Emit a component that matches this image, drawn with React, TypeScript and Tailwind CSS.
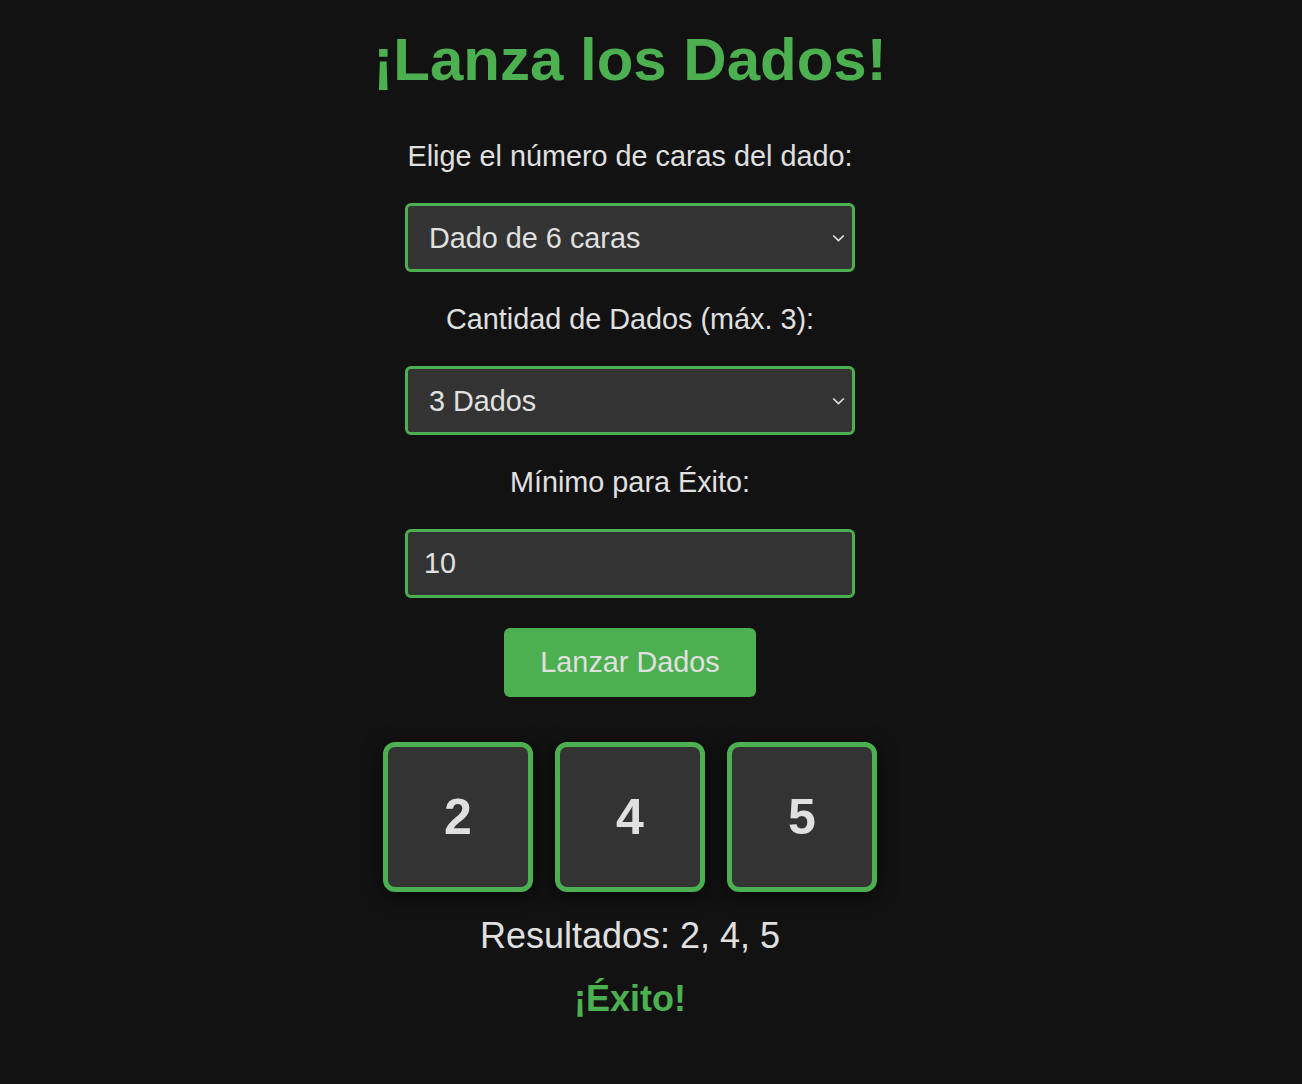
import React, { useState } from "react";

const Chevron = () => (
  <svg
    className="pointer-events-none absolute right-[10px] top-1/2 -translate-y-1/2"
    width="13"
    height="8"
    viewBox="0 0 13 8"
    fill="none"
  >
    <path d="M1.2 1.5 L6.5 6.5 L11.8 1.5" stroke="#e0e0e0" strokeWidth="1.7" />
  </svg>
);

const Die = (props: { value: number }) => (
  <div className="flex h-[150px] w-[150px] items-center justify-center rounded-[12px] border-[5px] border-[#4caf50] bg-[#333333] text-[50px] font-bold text-[#e0e0e0] shadow-[0_4px_20px_rgba(0,0,0,0.6)]">
    {props.value}
  </div>
);

export default function App() {
  const [sides, setSides] = useState("6");
  const [count, setCount] = useState("3");
  const [min, setMin] = useState("10");
  const results = [2, 4, 5];

  return (
    <div className="min-h-[1084px] bg-[#121212] font-['Liberation_Sans',Arial,sans-serif] text-[#e0e0e0]">
      <div className="flex w-[1260px] flex-col items-center pt-[24px]">
        <h1 className="text-[60px] font-bold leading-[72px] text-[#4caf50]">¡Lanza los Dados!</h1>

        <label className="mt-[44px] text-[28.8px] leading-[32px]">Elige el número de caras del dado:</label>
        <div className="relative mt-[31px]">
          <select
            value={sides}
            onChange={e => setSides(e.target.value)}
            className="h-[69px] w-[450px] appearance-none rounded-[6px] border-[3px] border-[#4caf50] bg-[#333333] pl-[21px] pt-[2px] text-[28.8px] text-[#e0e0e0] outline-none"
          >
            <option value="4">Dado de 4 caras</option>
            <option value="6">Dado de 6 caras</option>
            <option value="8">Dado de 8 caras</option>
            <option value="10">Dado de 10 caras</option>
            <option value="12">Dado de 12 caras</option>
            <option value="20">Dado de 20 caras</option>
          </select>
          <Chevron />
        </div>

        <label className="mt-[31px] text-[28.8px] leading-[32px]">Cantidad de Dados (máx. 3):</label>
        <div className="relative mt-[31px]">
          <select
            value={count}
            onChange={e => setCount(e.target.value)}
            className="h-[69px] w-[450px] appearance-none rounded-[6px] border-[3px] border-[#4caf50] bg-[#333333] pl-[21px] pt-[2px] text-[28.8px] text-[#e0e0e0] outline-none"
          >
            <option value="1">1 Dado</option>
            <option value="2">2 Dados</option>
            <option value="3">3 Dados</option>
          </select>
          <Chevron />
        </div>

        <label className="mt-[31px] text-[28.8px] leading-[32px]">Mínimo para Éxito:</label>
        <input
          type="text"
          value={min}
          onChange={e => setMin(e.target.value)}
          className="mt-[31px] h-[69px] w-[450px] rounded-[6px] border-[3px] border-[#4caf50] bg-[#333333] px-[16px] text-[28.8px] text-[#e0e0e0] outline-none"
        />

        <button className="mt-[30px] h-[69px] w-[252px] rounded-[6px] bg-[#4caf50] text-[28.8px] text-[#e0e0e0]">
          Lanzar Dados
        </button>

        <div className="mt-[45px] flex gap-[22px]">
          {results.map((r, i) => (
            <Die key={i} value={r} />
          ))}
        </div>

        <p className="mt-[24px] text-[36px] leading-[40px]">Resultados: {results.join(", ")}</p>
        <p className="mt-[23px] text-[36px] font-bold leading-[40px] text-[#4caf50]">¡Éxito!</p>
      </div>
    </div>
  );
}
